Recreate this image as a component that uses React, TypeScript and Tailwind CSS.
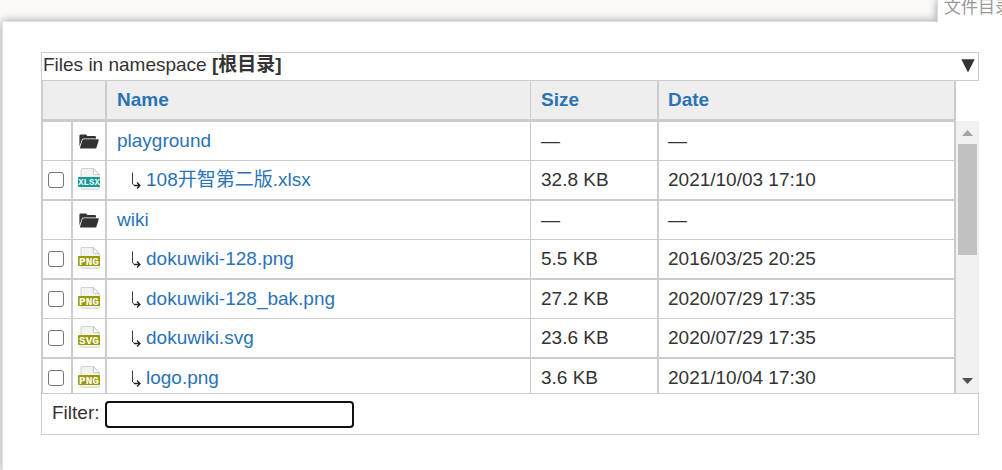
import { useState } from "react";
import clsx from "clsx";

type Entry = {
  name: string;
  kind: "folder" | "xlsx" | "png" | "svg";
  size: string;
  date: string;
};

const entries: Entry[] = [
  { name: "playground", kind: "folder", size: "—", date: "—" },
  { name: "108开智第二版.xlsx", kind: "xlsx", size: "32.8 KB", date: "2021/10/03 17:10" },
  { name: "wiki", kind: "folder", size: "—", date: "—" },
  { name: "dokuwiki-128.png", kind: "png", size: "5.5 KB", date: "2016/03/25 20:25" },
  { name: "dokuwiki-128_bak.png", kind: "png", size: "27.2 KB", date: "2020/07/29 17:35" },
  { name: "dokuwiki.svg", kind: "svg", size: "23.6 KB", date: "2020/07/29 17:35" },
  { name: "logo.png", kind: "png", size: "3.6 KB", date: "2021/10/04 17:30" },
];

function FolderIcon() {
  return (
    <svg viewBox="0 0 20 15" className="mx-auto h-[15px] w-5" fill="#333" aria-hidden="true">
      <path d="M0.4 12.4V1.7Q0.4 0.4 1.7 0.4H6.6Q7.5 0.4 7.8 1.2L8.2 2.1H15.8Q17 2.1 17 3.3V4.4H4.6Q3.3 4.4 2.9 5.4Z" />
      <path d="M4.6 5.2H19Q20 5.2 19.7 6.2L17.6 13.2Q17.3 14.4 16.1 14.4H1.6Q0.8 14.4 1.1 13.5L3.4 6.1Q3.7 5.2 4.6 5.2Z" />
    </svg>
  );
}

function FileIcon({ kind }: { kind: "xlsx" | "png" | "svg" }) {
  const color = kind === "xlsx" ? "#159a98" : "#9a9a05";
  return (
    <svg viewBox="0 0 22 22" className="mx-auto mb-0.5 size-[22px]" aria-hidden="true">
      <path d="M3.5 0.5H15.5L21.3 6.4V20Q21.3 21.3 20 21.3H4.5Q3 21.3 3 20V1.5Q3 0.5 3.5 0.5Z" fill="#f3f3f3" stroke="#d2d2d2" />
      <path d="M15.3 0.6V5.2Q15.3 6.6 16.7 6.6H21.2Z" fill="#fff" stroke="#c4c4c4" />
      <rect x="0" y="9" width="22" height="10" rx="1" fill={color} />
      <text
        x="11"
        y={kind === "xlsx" ? 17 : 18}
        textAnchor="middle"
        fill="#fff"
        className={clsx("font-['Liberation_Mono',monospace] font-bold", kind === "xlsx" ? "text-[9px]" : "text-[11px]")}
      >
        {kind.toUpperCase()}
      </text>
    </svg>
  );
}

function ChildArrow() {
  return (
    <svg viewBox="0 0 10 18" className="mt-0.5 ml-3.5 h-[18px] w-2.5 shrink-0" fill="none" aria-hidden="true">
      <path d="M1.5 0.5V12L3.5 13.5" stroke="#5a3330" />
      <path d="M3 13.5H9M6 10.5L9 13.5L6 16.5" stroke="#222" strokeWidth="1.3" />
    </svg>
  );
}

function Row({ entry }: { entry: Entry }) {
  const isFolder = entry.kind === "folder";
  return (
    <tr className="*:h-[39px] *:border-b *:border-[#ccc] *:p-0 even:*:h-10 even:*:border-b-2">
      <td className="border-x-2">
        {!isFolder && (
          <input
            type="checkbox"
            aria-label={entry.name}
            className="ml-[5px] block size-4 appearance-none rounded-[3px] border border-[#767676] bg-white checked:bg-[#2b73b7]"
          />
        )}
      </td>
      <td className="border-r-2">
        {entry.kind === "folder" ? <FolderIcon /> : <FileIcon kind={entry.kind} />}
      </td>
      <td className="border-r">
        <div className="flex items-center px-2.5 leading-6">
          {!isFolder && <ChildArrow />}
          <a href="#" className={clsx("text-[#2b73b7] hover:underline", !isFolder && "ml-[5px]")}>
            {entry.name}
          </a>
        </div>
      </td>
      <td className="border-r-2">
        <div className="px-2.5 leading-6">{entry.size}</div>
      </td>
      <td className="border-r-2">
        <div className="px-[9px] leading-6">{entry.date}</div>
      </td>
    </tr>
  );
}

function Scrollbar() {
  return (
    <div className="mt-10 flex w-[23px] shrink-0 flex-col bg-[#f1f1f1]" aria-hidden="true">
      <svg viewBox="0 0 23 23" className="size-[23px]">
        <path d="M6 15H17L11.5 9Z" fill="#a3a3a3" />
      </svg>
      <div className="mr-0.5 ml-0.5 h-[111px] bg-[#c1c1c1]" />
      <svg viewBox="0 0 23 23" className="mt-auto size-[23px]">
        <path d="M6 8H17L11.5 14Z" fill="#505050" />
      </svg>
    </div>
  );
}

export default function App() {
  const [filter, setFilter] = useState("");
  const [open, setOpen] = useState(true);
  const visible = entries.filter((e) => e.name.toLowerCase().includes(filter.toLowerCase()));

  return (
    <div className="flex min-h-screen flex-col overflow-hidden bg-[#fbfaf9] font-['Liberation_Sans','Noto_Sans_CJK_SC',sans-serif] text-[19px] text-[#333]">
      <div className="relative z-10 -mb-px flex h-[22px] justify-end overflow-hidden">
        <div className="w-[65px] border-l border-[#ddd] bg-white pl-1.5 text-[17px] leading-4 whitespace-nowrap text-[#999] shadow-[0_0_8px_#999]">
          文件目录
        </div>
      </div>

      <main className="-mr-2 ml-0.5 flex-1 rounded-tl-xs border-t border-l border-[#e4e4e4] bg-white pt-[30px] pr-[31px] pb-9 pl-[38px] shadow-[0_0_8px_#999]">
        <button
          type="button"
          aria-expanded={open}
          onClick={() => setOpen(!open)}
          className="flex h-[29px] w-full items-start justify-between border border-[#ccc] px-px text-left leading-6"
        >
          <span>
            Files in namespace <b>[根目录]</b>
          </span>
          <svg viewBox="0 0 14 14" className="mt-1.5 mr-0.5 size-3.5" fill="#333" aria-hidden="true">
            <path d="M0.3 0.3H13.7L7 13.5Z" />
          </svg>
        </button>

        {open && (
          <>
            <div className="flex h-[312px]">
              <div className="min-w-0 flex-1 overflow-y-auto [scrollbar-width:none]">
                <table className="w-full table-fixed border-separate border-spacing-0 text-left">
                  <colgroup>
                    <col className="w-8" />
                    <col className="w-[34px]" />
                    <col />
                    <col className="w-32" />
                    <col className="w-[297px]" />
                  </colgroup>
                  <thead className="sticky top-0 z-10 bg-[#eee] text-[#2b73b7]">
                    <tr className="*:h-[41px] *:border-b-3 *:border-[#ccc] *:py-0 *:leading-6">
                      <td colSpan={2} className="border-x-2" />
                      <th className="border-r px-2.5">Name</th>
                      <th className="border-r-2 px-2.5">Size</th>
                      <th className="border-r-2 px-[9px]">Date</th>
                    </tr>
                  </thead>
                  <tbody>
                    {visible.map((entry) => (
                      <Row key={entry.name} entry={entry} />
                    ))}
                  </tbody>
                </table>
              </div>
              <Scrollbar />
            </div>

            <div className="flex h-[42px] items-start border border-[#ccc] pt-[7px] pl-2.5">
              <label htmlFor="filter" className="leading-6">
                Filter:
              </label>
              <input
                id="filter"
                type="text"
                value={filter}
                onChange={(e) => setFilter(e.target.value)}
                className="ml-[5px] h-[27px] w-[249px] rounded-sm border-2 border-[#101010] bg-white px-1 outline-none"
              />
            </div>
          </>
        )}
      </main>
    </div>
  );
}
